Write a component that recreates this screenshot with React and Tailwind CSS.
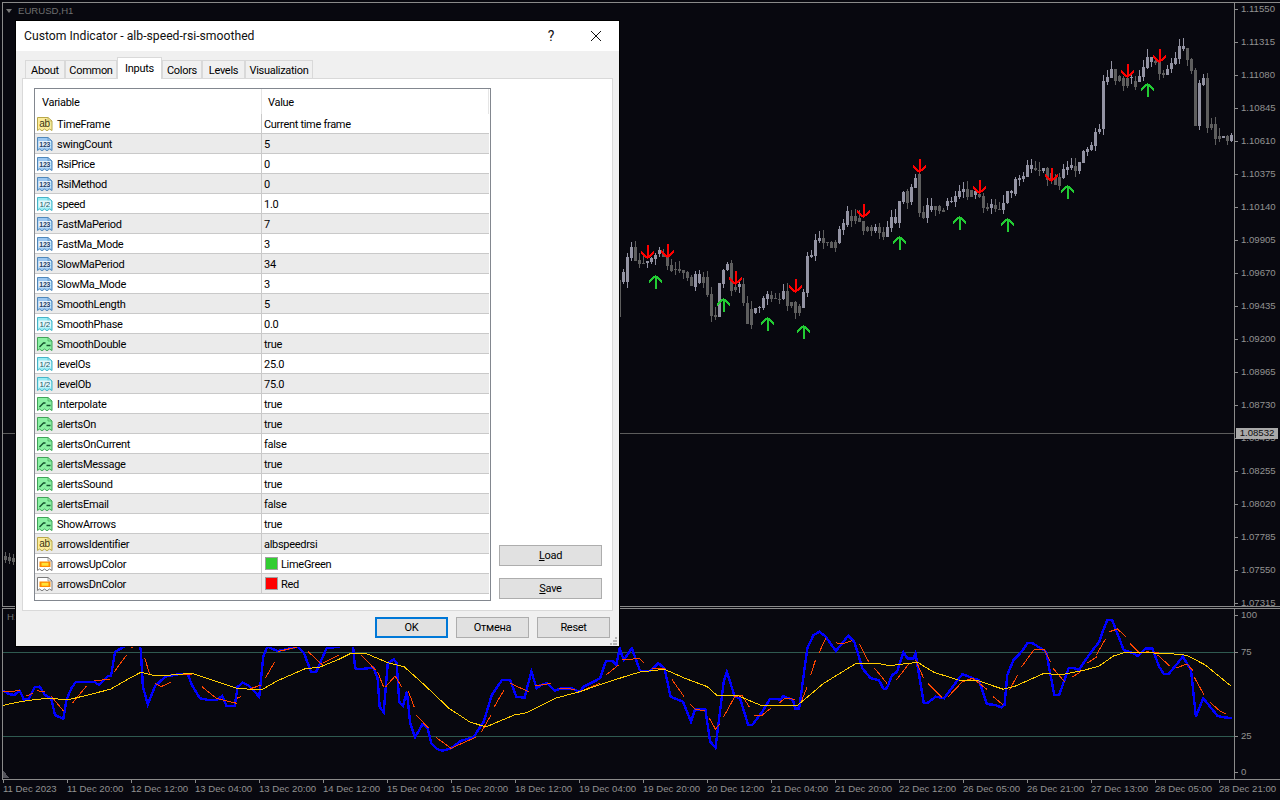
import React from 'react';

// candle bodies as [top, bottom], read off the chart at three y offsets
const bodiesA = [[300,410],[276,305],[232,305],[200,235],[202,242],[240,252],[248,250],[243,250],[234,245],[225,236],[210,222],[220,230],[232,258],[255,272],[267,270],[266,272],[270,278],[276,293],[292,318],[282,320],[282,308],[292,310],[292,345],[343,407],[406,410],[308,410],[270,312],[252,270],[250,332],[320,330],[312,322],[312,368],[368,432],[388,435],[385,400],[382,384],[354,384],[342,356],[345,356],[355,358],[357,359],[333,358],[333,378],[366,378],[366,400],[378,398],[336,384],[228,338],[225,231],[180,227],[175,183],[173,189],[187,188],[186,204],[186,204],[147,188],[129,150],[93,134],[108,122],[108,122],[115,125],[123,153],[142,153],[142,153],[141,152],[142,158],[156,170],[142,170],[112,143],[112,128],[64,128]];
const bodiesB = [[155,187],[153,190],[141,187],[113,143],[102,218],[216,235],[195,235],[197,210],[198,210],[198,212],[210,216],[183,198],[183,185],[168,186],[152,171],[147,155],[147,171],[150,172],[152,165],[162,172],[168,205],[202,206],[192,205],[195,207],[207,208],[190,210],[153,190],[153,158],[117,162],[113,120]];
const bodiesC = [[468,476],[435,471],[435,446],[445,450],[450,452],[445,452],[445,480],[458,482],[470,496],[470,498],[447,474],[441,449],[435,443],[438,452],[426,453],[393,428],[386,396],[375,390],[335,378],[327,335],[182,326],[170,186],[147,174],[147,182],[168,182],[173,197],[173,197],[172,175],[183,200],[168,186],[141,170],[110,144],[110,126],[124,130],[125,161],[160,165],[147,165],[130,148],[114,132],[78,116],[78,86],[84,120],[118,152],[150,318],[190,318],[174,194],[174,325],[312,325],[312,356],[348,356],[348,354],[348,362],[344,362]];

const candles = [
  ...bodiesA.map((b) => [180 + b[0] / 3, 180 + b[1] / 3]),
  ...bodiesB.map((b) => [140 + b[0] / 3, 140 + b[1] / 3]),
  ...bodiesC.map((b) => [20 + b[0] / 3, 20 + b[1] / 3]),
].map((b, i, all) => {
  const x = 619 + i * 4;
  const prev = all[i - 1] || b;
  const up = Math.abs(b[1] - prev[0]) < Math.abs(b[0] - prev[1]);
  return {
    x,
    top: Math.round(b[0]),
    bottom: Math.max(Math.round(b[1]), Math.round(b[0]) + 1),
    high: Math.round(b[0]) - ((i * 37 + 11) % 9),
    low: Math.round(b[1]) + ((i * 53 + 5) % 7),
    up: x === 1199 ? true : up,
  };
});

const downArrows = [[647,258],[667,257],[735,284],[795,292],[863,217],[919,172],[979,193],[1051,181],[1127,77],[1159,62]];
const upArrows = [[655,276],[723,299],[767,318],[803,326],[899,237],[959,217],[1007,219],[1067,186],[1147,84]];

// indicator lines, traced in two crops
const left = (pts) => pts.map(([x, y]) => `${(x / 2.45).toFixed(1)},${(600 + y / 3).toFixed(1)}`).join(' ');
const right = (pts) => pts.map(([x, y]) => `${(640 + x / 2.45).toFixed(1)},${(600 + y / 3).toFixed(1)}`).join(' ');

const blueL = [[8,272],[22,282],[35,285],[48,272],[58,298],[70,298],[85,262],[97,260],[110,285],[125,295],[135,345],[155,357],[163,300],[175,265],[185,247],[230,245],[243,255],[265,228],[272,228],[282,155],[320,130],[340,130],[345,150],[350,260],[362,313],[380,258],[405,230],[440,222],[460,222],[470,255],[490,295],[510,300],[530,300],[545,288],[555,318],[575,318],[582,260],[595,248],[610,257],[635,290],[645,170],[655,140],[680,153],[700,148],[730,140],[745,160],[762,215],[775,215],[800,145],[830,140],[860,130],[865,140],[870,205],[880,208],[915,203],[925,235],[930,320],[940,337],[950,190],[965,178],[972,190],[978,305],[987,318],[997,275],[1005,370],[1017,412],[1035,373],[1047,382],[1057,430],[1070,447],[1085,452],[1105,445],[1130,422],[1160,412],[1185,365],[1205,285],[1230,240],[1250,240],[1265,290],[1285,293],[1302,215],[1315,265],[1325,255],[1340,250],[1360,272],[1375,265],[1400,265],[1420,275],[1430,260],[1450,248],[1470,235],[1485,182],[1500,182],[1510,195],[1518,145],[1528,180],[1548,145],[1568,212]];
const blueR = [[0,212],[25,212],[45,190],[60,205],[75,290],[105,305],[125,365],[135,328],[160,328],[172,425],[185,443],[205,245],[213,215],[232,290],[245,295],[265,375],[275,375],[300,335],[318,297],[335,297],[345,300],[350,288],[375,300],[380,325],[390,325],[410,145],[425,105],[440,95],[455,110],[480,153],[510,107],[525,125],[545,205],[565,235],[585,240],[597,267],[605,265],[618,225],[630,215],[645,157],[655,175],[670,175],[675,160],[695,308],[705,308],[725,290],[745,295],[790,222],[815,235],[830,240],[850,312],[870,315],[885,322],[893,315],[900,225],[915,180],[935,155],[950,128],[960,128],[995,155],[1015,285],[1027,285],[1050,205],[1060,203],[1075,210],[1100,165],[1125,125],[1135,90],[1145,60],[1157,60],[1185,150],[1205,158],[1220,168],[1240,145],[1255,145],[1272,200],[1283,222],[1295,222],[1330,170],[1350,210],[1362,350],[1380,295],[1415,348],[1430,352],[1450,354]];
const yellowL = [[8,316],[50,305],[90,298],[125,295],[165,300],[215,285],[270,268],[310,240],[345,217],[375,226],[410,226],[470,220],[520,240],[580,265],[640,270],[680,242],[750,205],[780,203],[830,178],[860,160],[900,162],[950,188],[990,200],[1040,255],[1100,325],[1150,365],[1190,381],[1260,345],[1290,338],[1360,295],[1420,275],[1480,250],[1530,230],[1568,216]];
const yellowR = [[0,216],[60,208],[110,235],[165,260],[190,288],[240,287],[300,318],[385,317],[450,250],[530,190],[590,192],[610,197],[680,187],[720,217],[780,240],[830,243],[890,268],[920,258],[990,220],[1030,225],[1090,210],[1125,198],[1160,168],[1190,157],[1290,160],[1340,166],[1385,195],[1447,257]];
const redL = [[[8,275],[50,272]],[[65,288],[80,280]],[[90,272],[110,275]],[[125,288],[155,332]],[[178,308],[212,258]],[[230,242],[270,238]],[[280,215],[310,165]],[[320,145],[335,135]],[[355,175],[367,225]],[[380,250],[395,260],[420,245]],[[435,225],[470,222]],[[495,260],[530,295],[580,310]],[[580,295],[590,290]],[[605,270],[640,255]],[[650,235],[673,185]],[[680,155],[730,140]],[[755,155],[790,195]],[[790,190],[830,165]],[[885,165],[920,210]],[[925,215],[940,262]],[[945,260],[968,228],[985,262]],[[1000,272],[1015,322]],[[1020,345],[1050,385]],[[1068,412],[1105,445],[1165,412]],[[1180,395],[1203,345]],[[1210,322],[1235,270]],[[1250,250],[1295,275]],[[1310,258],[1350,250]],[[1370,265],[1410,268]],[[1420,275],[1470,250]],[[1485,225],[1515,195]],[[1525,180],[1568,175]]];
const redR = [[[0,178],[10,190]],[[30,205],[60,205]],[[78,238],[108,290]],[[122,312],[135,328],[160,332]],[[170,355],[185,388],[195,372]],[[205,350],[232,290],[250,285],[268,322]],[[280,345],[300,345],[320,325]],[[340,310],[355,295],[380,298]],[[395,305],[410,260]],[[418,225],[430,180]],[[438,160],[455,115]],[[480,128],[495,132],[520,122]],[[538,133],[560,185]],[[575,205],[605,250]],[[628,240],[660,190]],[[675,180],[695,235]],[[705,250],[740,293]],[[755,290],[790,245],[815,235],[850,268]],[[865,290],[890,315]],[[905,270],[925,225]],[[935,200],[965,150],[990,147],[1005,185]],[[1012,205],[1040,245]],[[1058,232],[1080,215]],[[1095,190],[1120,170]],[[1118,165],[1140,118]],[[1150,95],[1170,87],[1190,110]],[[1200,130],[1225,160]],[[1240,155],[1280,160]],[[1268,165],[1298,198]],[[1312,205],[1340,192],[1355,212]],[[1358,232],[1382,285]],[[1395,305],[1420,332],[1436,342]]];

const prices = ['1.11550','1.11315','1.11080','1.10845','1.10610','1.10375','1.10140','1.09905','1.09670','1.09435','1.09200','1.08965','1.08730','1.08495','1.08255','1.08020','1.07785','1.07550','1.07315'];
const times = ['11 Dec 2023','11 Dec 20:00','12 Dec 12:00','13 Dec 04:00','13 Dec 20:00','14 Dec 12:00','15 Dec 04:00','15 Dec 20:00','18 Dec 12:00','19 Dec 04:00','19 Dec 20:00','20 Dec 12:00','21 Dec 04:00','21 Dec 20:00','22 Dec 12:00','26 Dec 05:00','26 Dec 21:00','27 Dec 13:00','28 Dec 05:00','28 Dec 21:00'];

const rows = [
  ['ab', 'TimeFrame', 'Current time frame'],
  ['int', 'swingCount', '5'],
  ['int', 'RsiPrice', '0'],
  ['int', 'RsiMethod', '0'],
  ['dbl', 'speed', '1.0'],
  ['int', 'FastMaPeriod', '7'],
  ['int', 'FastMa_Mode', '3'],
  ['int', 'SlowMaPeriod', '34'],
  ['int', 'SlowMa_Mode', '3'],
  ['int', 'SmoothLength', '5'],
  ['dbl', 'SmoothPhase', '0.0'],
  ['bool', 'SmoothDouble', 'true'],
  ['dbl', 'levelOs', '25.0'],
  ['dbl', 'levelOb', '75.0'],
  ['bool', 'Interpolate', 'true'],
  ['bool', 'alertsOn', 'true'],
  ['bool', 'alertsOnCurrent', 'false'],
  ['bool', 'alertsMessage', 'true'],
  ['bool', 'alertsSound', 'true'],
  ['bool', 'alertsEmail', 'false'],
  ['bool', 'ShowArrows', 'true'],
  ['ab', 'arrowsIdentifier', 'albspeedrsi'],
  ['color', 'arrowsUpColor', 'LimeGreen'],
  ['color', 'arrowsDnColor', 'Red'],
];

const iconStyle = {
  ab: { fill: '#fbec9c', stroke: '#b8a84a' },
  int: { fill: '#9cc8f2', stroke: '#4f88bb' },
  dbl: { fill: '#98ecf4', stroke: '#46b5c8' },
  bool: { fill: '#8cf0a4', stroke: '#3fa558' },
  color: { fill: '#ffffff', stroke: '#7a7a7a' },
};

const TypeIcon = ({ type }) => {
  const s = iconStyle[type];
  return (
    <svg width="16" height="16" viewBox="0 0 16 16" className="shrink-0">
      <path
        d="M0.5 1.5H11L15 5V14.5L12.5 13 10 14.8 7.5 13 5 14.8 2.5 13 0.5 14.5Z"
        fill={s.fill}
        stroke={s.stroke}
      />
      <path d="M11 1.5V5H15" fill="none" stroke={s.stroke} strokeWidth="0.7" />
      {type === 'ab' && (
        <text x="7.6" y="11" textAnchor="middle" fontSize="10" fontFamily="Liberation Sans, sans-serif" fill="#3a3410">ab</text>
      )}
      {type === 'int' && (
        <>
          <rect x="1.5" y="5" width="12.5" height="6.5" fill="#e6f1fb" />
          <text x="7.7" y="10.7" textAnchor="middle" fontSize="7" fontWeight="700" fontFamily="Liberation Sans, sans-serif" fill="#1d3f66">123</text>
        </>
      )}
      {type === 'dbl' && (
        <>
          <rect x="1.5" y="4.5" width="12.5" height="7" fill="#e4f8fb" />
          <text x="7.7" y="10.8" textAnchor="middle" fontSize="8" fontFamily="Liberation Sans, sans-serif" fill="#165a66">1/2</text>
        </>
      )}
      {type === 'bool' && (
        <path d="M2.5 11 6.5 7H8.5M9.5 9.5H13.5" fill="none" stroke="#14532d" strokeWidth="1.4" />
      )}
      {type === 'color' && (
        <>
          <rect x="2.5" y="5.5" width="11" height="5.5" fill="#ff8a00" />
          <rect x="4.5" y="6.8" width="7" height="3" fill="#ffe23a" />
        </>
      )}
    </svg>
  );
};

const PriceChart = () => (
  <svg width="1231" height="603" viewBox="3 3 1231 603" shapeRendering="crispEdges" className="block">
    <line x1="3" x2="1234" y1="433.5" y2="433.5" stroke="#5c5c5c" />
    {[5, 9, 13].map((x, i) => (
      <g key={x} fill="#606060">
        <rect x={x} y={552 + i} width="1" height="11" />
        <rect x={x - 1} y={556 + i} width="3" height="4" />
      </g>
    ))}
    {candles.map((c) => (
      <g key={c.x} fill={c.up ? '#9393a3' : '#5e5e5e'}>
        <rect x={c.x} y={c.high} width="1" height={c.low - c.high} />
        <rect x={c.x - 1} y={c.top} width="3" height={c.bottom - c.top} />
      </g>
    ))}
    {downArrows.map(([x, y]) => (
      <path key={x} d={`M${x + 0.5} ${y - 13}V${y}M${x - 6} ${y - 6}L${x + 0.5} ${y}L${x + 7} ${y - 6}`} fill="none" stroke="#ff0000" strokeWidth="2" />
    ))}
    {upArrows.map(([x, y]) => (
      <path key={x} d={`M${x + 0.5} ${y + 13}V${y}M${x - 6} ${y + 6}L${x + 0.5} ${y}L${x + 7} ${y + 6}`} fill="none" stroke="#22cc33" strokeWidth="2" />
    ))}
  </svg>
);

const IndicatorChart = () => (
  <svg width="1231" height="170" viewBox="3 609 1231 170" shapeRendering="crispEdges" className="block">
    <line x1="3" x2="1234" y1="652.5" y2="652.5" stroke="#2f5a50" />
    <line x1="3" x2="1234" y1="736.5" y2="736.5" stroke="#2f5a50" />
    <polyline points={left(blueL)} fill="none" stroke="#0000ff" strokeWidth="2.4" />
    <polyline points={right(blueR)} fill="none" stroke="#0000ff" strokeWidth="2.4" />
    {redL.map((p, i) => (
      <polyline key={i} points={left(p)} fill="none" stroke="#ff4500" />
    ))}
    {redR.map((p, i) => (
      <polyline key={i} points={right(p)} fill="none" stroke="#ff4500" />
    ))}
    <polyline points={left(yellowL)} fill="none" stroke="#ffcc00" />
    <polyline points={right(yellowR)} fill="none" stroke="#ffcc00" />
    <path d="M3 770 L9 778 H3Z" fill="#55555c" />
  </svg>
);

const Tick = ({ label }) => (
  <div className="flex h-[12px] items-center gap-[3px]">
    <div className="h-px w-[3px] bg-[#8c8c8c]" />
    <span>{label}</span>
  </div>
);

const Dialog = () => (
  <div className="absolute left-[16px] top-[21px] flex h-[625px] w-[603px] flex-col bg-[#f0f0f0] font-['Roboto',sans-serif] text-[11px] tracking-[-0.3px] text-black shadow-[0_0_0_1px_#000]">
    <div className="flex h-[30px] items-center bg-white pl-[8px] text-[12.2px] tracking-normal text-[#111]">
      <span>Custom Indicator - alb-speed-rsi-smoothed</span>
      <span className="ml-auto w-[14px] text-center text-[14px]">?</span>
      <svg width="12" height="12" viewBox="0 0 12 12" className="ml-[32px] mr-[17px]">
        <path d="M1 1 11 11M11 1 1 11" stroke="#111" strokeWidth="1" />
      </svg>
    </div>
    <div className="relative flex flex-1 flex-col px-[6px]">
      <div className="flex h-[27px] items-end pl-[3px]">
        {[['About', 'w-[40px]'], ['Common', 'w-[52px]'], ['Inputs', 'w-[45px]'], ['Colors', 'w-[40px]'], ['Levels', 'w-[43px]'], ['Visualization', 'w-[68px]']].map(([t, w]) =>
          t === 'Inputs' ? (
            <div key={t} className={`${w} relative z-10 -mb-px flex h-[22px] items-start justify-center border border-b-0 border-[#d9d9d9] bg-white pt-[3px]`}>
              {t}
            </div>
          ) : (
            <div key={t} className={`${w} flex h-[18px] items-center justify-center border border-b-0 border-[#d9d9d9] pt-[4px]`}>
              {t}
            </div>
          )
        )}
      </div>
      <div className="flex h-[533px] w-[591px] gap-[8px] border border-[#d9d9d9] bg-white pl-[11px] pt-[9px]">
        <div className="h-[513px] w-[457px] border border-[#82878f] bg-white">
          <div className="flex h-[25px] items-center">
            <div className="flex h-full w-[227px] items-center border-r border-[#e5e5e5] pl-[7px] pt-[4px]">Variable</div>
            <div className="flex h-full w-[227px] items-center border-r border-[#e5e5e5] pl-[6px] pt-[4px]">Value</div>
          </div>
          {rows.map(([type, name, value], i) => (
            <div key={name} className={`flex h-[20px] w-[454px] border-b border-[#c9c9c9] ${i % 2 ? 'bg-[#ebebeb]' : 'bg-white'}`}>
              <div className="flex w-[227px] items-center gap-[4px] border-r border-[#c9c9c9] pl-[2px]">
                <TypeIcon type={type} />
                <span className="pt-[3px]">{name}</span>
              </div>
              <div className="flex flex-1 items-center gap-[3px] pl-[2px]">
                {value === 'LimeGreen' && <div className="ml-px h-[13px] w-[13px] border border-[#a0a0a0] bg-[#32cd32]" />}
                {value === 'Red' && <div className="ml-px h-[13px] w-[13px] border border-[#a0a0a0] bg-[#ff0000]" />}
                <span className="pt-[3px]">{value}</span>
              </div>
            </div>
          ))}
        </div>
        <div className="flex h-[513px] w-[103px] flex-col justify-end gap-[12px] pb-[2px]">
          <button className="h-[21px] border border-[#adadad] bg-[#e1e1e1] pt-[2px]"><span className="underline">L</span>oad</button>
          <button className="h-[21px] border border-[#adadad] bg-[#e1e1e1] pt-[2px]"><span className="underline">S</span>ave</button>
        </div>
      </div>
      <div className="flex justify-end gap-[8px] pr-[3px] pt-[6px]">
        <button className="h-[21px] w-[73px] border-2 border-[#0078d7] bg-[#e1e1e1] pt-[1px]">OK</button>
        <button className="h-[21px] w-[73px] border border-[#adadad] bg-[#e1e1e1] pt-[1px]">Отмена</button>
        <button className="h-[21px] w-[73px] border border-[#adadad] bg-[#e1e1e1] pt-[1px]">Reset</button>
      </div>
      <svg width="8" height="8" viewBox="0 0 8 8" className="absolute bottom-[1px] right-[1px]" shapeRendering="crispEdges">
        <path d="M5 0h2v2H5zM2.5 3h2v2h-2zM5 3h2v2H5zM0 6h2v2H0zM2.5 6h2v2h-2zM5 6h2v2H5z" fill="#b8b8b8" />
      </svg>
    </div>
  </div>
);

export default function App() {
  return (
    <div className="relative flex h-[800px] w-[1280px] flex-col overflow-hidden bg-[#08080f] font-['Liberation_Sans',sans-serif] text-[9.6px] text-[#929292]">
      <div className="h-[2px]" />
      {/* price pane */}
      <div className="relative ml-[2px] flex h-[605px] border-b border-l border-t border-[#8a8a8a]">
        <div className="relative h-[603px] w-[1231px]">
          <PriceChart />
          <div className="absolute left-[3px] top-[1px] flex items-center gap-[6px] leading-[14px] text-[#6f6f6f]">
            <div className="h-0 w-0 border-x-[3.5px] border-t-[4px] border-x-transparent border-t-[#777]" />
            <span>EURUSD,H1</span>
          </div>
        </div>
        <div className="flex flex-1 flex-col border-l border-[#8a8a8a]">
          {prices.map((p) => (
            <div key={p} className="h-[33px] shrink-0">
              <Tick label={p} />
            </div>
          ))}
        </div>
        <div className="absolute left-[1233px] top-[425px] flex h-[11px] w-[42px] items-center justify-center bg-[#a9a9a9] text-[#0c0c0c]">1.08532</div>
      </div>
      <div className="h-px" />
      {/* indicator pane */}
      <div className="ml-[2px] flex h-[172px] border-b border-l border-t border-[#8a8a8a]">
        <div className="relative h-[170px] w-[1231px]">
          <IndicatorChart />
          <span className="absolute left-[4px] top-[1px] leading-[14px] text-[#6f6f6f]">H1</span>
        </div>
        <div className="flex flex-1 flex-col border-l border-[#8a8a8a]">
          <Tick label="100" />
          <div className="mt-[25px]"><Tick label="75" /></div>
          <div className="mt-[72px]"><Tick label="25" /></div>
          <div className="mt-[24px]"><Tick label="0" /></div>
        </div>
      </div>
      {/* time axis */}
      <div className="flex pl-[3px] leading-[12px]">
        {times.map((t) => (
          <div key={t} className="w-[64px] shrink-0">
            <div className="h-[3px] w-px bg-[#8a8a8a]" />
            <div className="whitespace-nowrap">{t}</div>
          </div>
        ))}
      </div>
      <Dialog />
    </div>
  );
}
